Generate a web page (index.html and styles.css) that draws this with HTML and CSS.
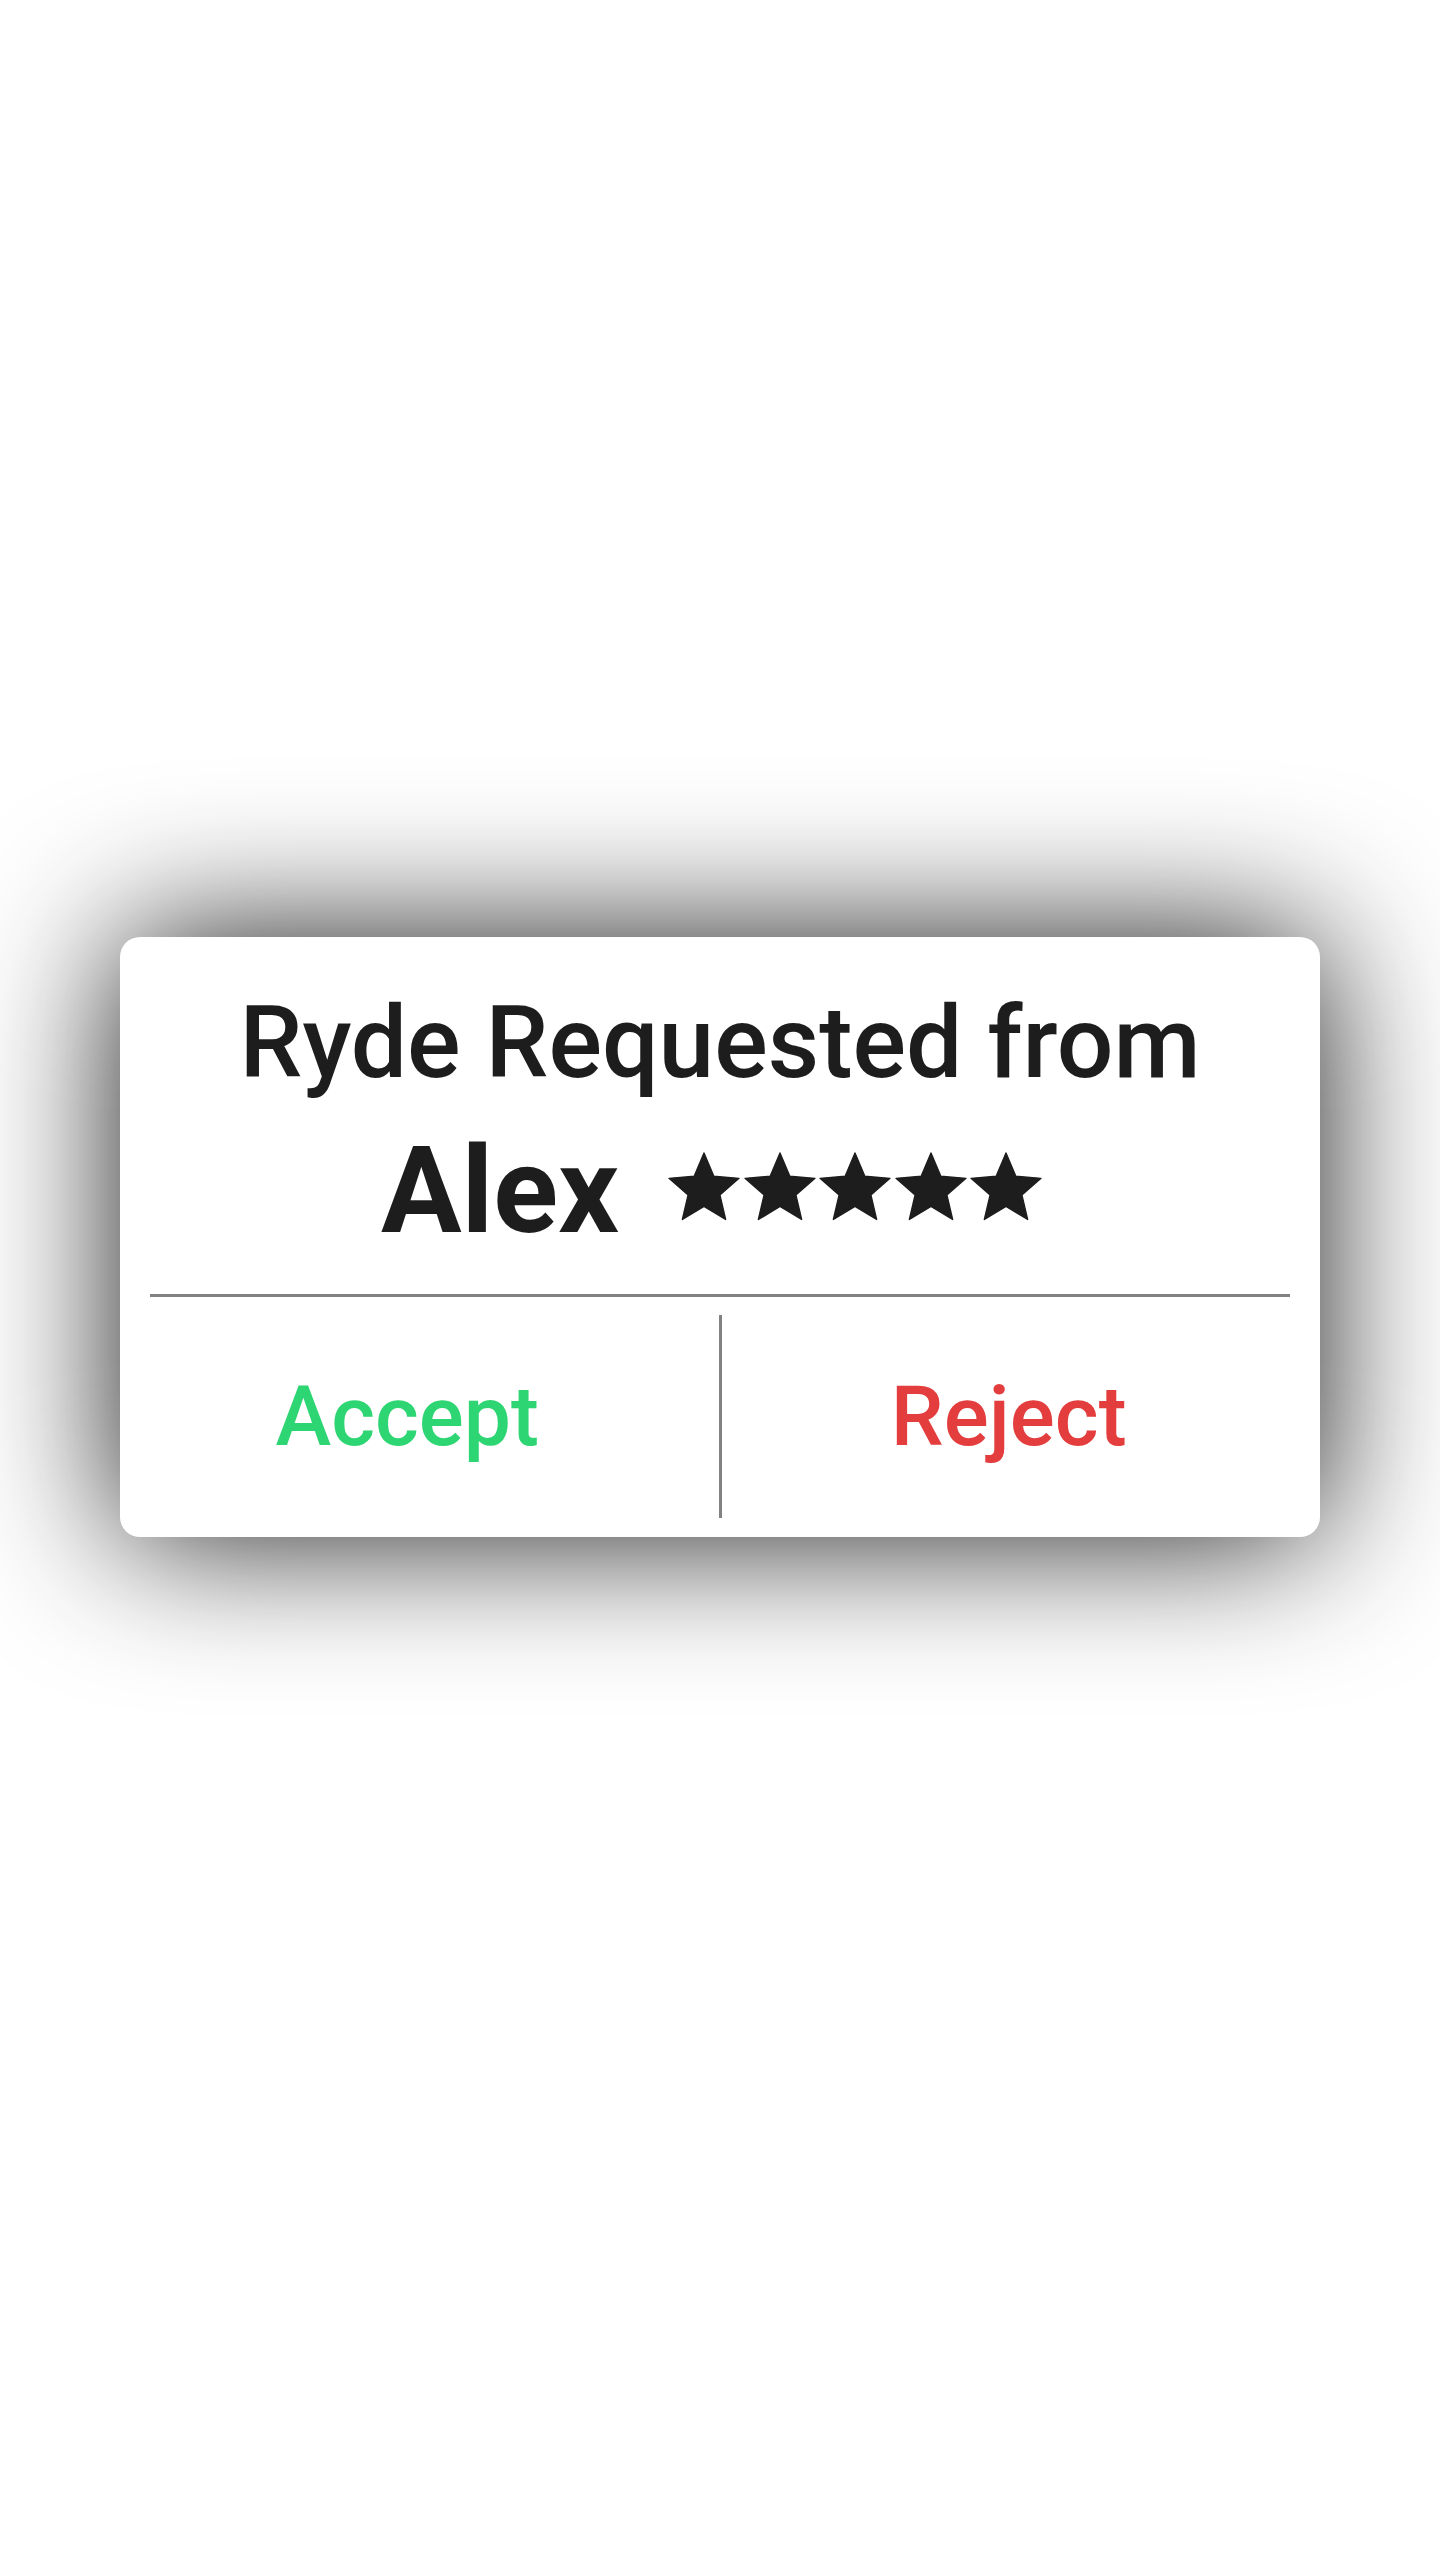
FILE: index.html
```html
<!DOCTYPE html>
<html lang="en">
<head>
<meta charset="utf-8">
<title>Ryde Request</title>
<link rel="stylesheet" href="styles.css">
</head>
<body>
<main class="screen">
  <section class="card">
    <h1 class="title">Ryde Requested from</h1>
    <div class="rider">
      <span class="rider-name">Alex</span>
      <span class="stars" aria-label="5 stars">
        <svg class="star" viewBox="2 2 20 19"><path d="M12 17.27L18.18 21l-1.64-7.03L22 9.24l-7.19-.61L12 2 9.19 8.63 2 9.24l5.46 4.73L5.820 21z"/></svg>
        <svg class="star" viewBox="2 2 20 19"><path d="M12 17.27L18.18 21l-1.64-7.03L22 9.24l-7.19-.61L12 2 9.19 8.63 2 9.24l5.46 4.73L5.82 21z"/></svg>
        <svg class="star" viewBox="2 2 20 19"><path d="M12 17.27L18.18 21l-1.64-7.03L22 9.24l-7.19-.61L12 2 9.19 8.63 2 9.24l5.46 4.73L5.82 21z"/></svg>
        <svg class="star" viewBox="2 2 20 19"><path d="M12 17.27L18.18 21l-1.64-7.03L22 9.24l-7.19-.61L12 2 9.19 8.63 2 9.24l5.46 4.73L5.82 21z"/></svg>
        <svg class="star" viewBox="2 2 20 19"><path d="M12 17.27L18.18 21l-1.64-7.03L22 9.24l-7.19-.61L12 2 9.19 8.63 2 9.24l5.46 4.73L5.82 21z"/></svg>
      </span>
    </div>
    <hr class="divider">
    <div class="actions">
      <button class="action action-accept">Accept</button>
      <span class="action-sep"></span>
      <button class="action action-reject">Reject</button>
    </div>
  </section>
</main>
</body>
</html>
```

FILE: styles.css
```css
html, body {
  margin: 0;
  padding: 0;
  background: #ffffff;
}

body {
  font-family: Roboto, "Liberation Sans", Arial, sans-serif;
  color: #1d1d1d;
}

.screen {
  min-height: 2560px;
  box-sizing: border-box;
  padding-top: 937px;
  display: flex;
  justify-content: center;
  align-items: flex-start;
}

.card {
  width: 1200px;
  height: 600px;
  box-sizing: border-box;
  background: #ffffff;
  border-radius: 20px;
  box-shadow: 0 0 150px rgba(0, 0, 0, 0.9);
  padding-top: 47px;
  display: flex;
  flex-direction: column;
}

.title {
  margin: 0;
  font-size: 100px;
  font-weight: 500;
  line-height: 117px;
  text-align: center;
  color: #1d1d1d;
}

.rider {
  margin-top: 20px;
  height: 141px;
  display: flex;
  justify-content: center;
  align-items: center;
  padding-right: 18px;
}

.rider-name {
  font-size: 120px;
  font-weight: 700;
  line-height: 141px;
  color: #1d1d1d;
}

.stars {
  margin-left: 50px;
  margin-bottom: 10px;
  display: flex;
  gap: 5.5px;
}

.star {
  width: 70px;
  height: 66.5px;
  overflow: visible;
  fill: #1d1d1d;
  stroke: #1d1d1d;
  stroke-width: 0.4;
  stroke-linejoin: round;
}

.divider {
  margin: 32px 30px 0;
  height: 3px;
  border: 0;
  background: #828282;
}

.actions {
  flex: 1;
  display: flex;
  align-items: stretch;
  padding: 18px 0 19px;
}

.action {
  flex: 1;
  border: 0;
  background: transparent;
  font-family: Roboto, "Liberation Sans", Arial, sans-serif;
  font-size: 84px;
  font-weight: 500;
  padding: 0 24px 0 0;
  cursor: pointer;
}

.action-accept {
  color: #2ed573;
}

.action-reject {
  color: #e43d3d;
}

.action-sep {
  width: 3px;
  background: #828282;
}
```
